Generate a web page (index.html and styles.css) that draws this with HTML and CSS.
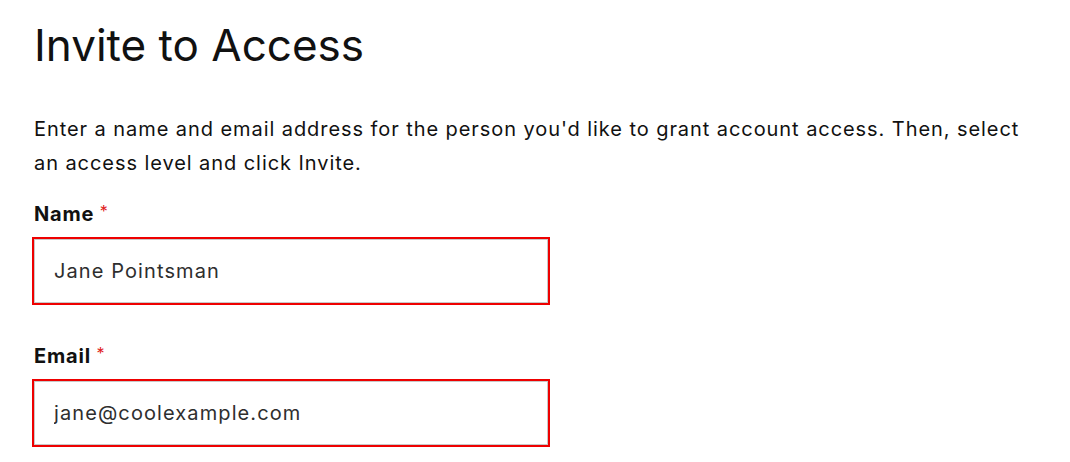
FILE: index.html
```html
<!DOCTYPE html>
<html lang="en">
<head>
<meta charset="utf-8">
<title>Invite to Access</title>
<link rel="stylesheet" href="styles.css">
</head>
<body>
<main class="page">
  <h1 class="title">Invite to Access</h1>
  <p class="intro">Enter a name and email address for the person you'd like to grant account access. Then, select an access level and click Invite.</p>
  <div class="field">
    <label class="label" for="name">Name <span class="req">*</span></label>
    <div class="input-wrap"><input class="input" id="name" type="text" value="Jane Pointsman"></div>
  </div>
  <div class="field">
    <label class="label" for="email">Email <span class="req">*</span></label>
    <div class="input-wrap"><input class="input" id="email" type="email" value="jane@coolexample.com"></div>
  </div>
</main>
</body>
</html>
```
FILE: styles.css
```css
html, body {
  margin: 0;
  background: #fff;
}
.page {
  padding: 15px 0 0 34px;
  font-family: "Inter", "Liberation Sans", sans-serif;
  color: #111;
}
.title {
  margin: 0;
  font-weight: 400;
  font-size: 44px;
  line-height: 60px;
  color: #111;
}
.intro {
  margin: 37px 0 0 0;
  width: 996px;
  font-size: 20px;
  line-height: 34px;
  letter-spacing: 0.93px;
  color: #111;
}
.field {
  margin-top: 21px;
}
.field + .field {
  margin-top: 38px;
}
.label {
  display: block;
  font-weight: 700;
  font-size: 20px;
  line-height: 26px;
  letter-spacing: 0.8px;
}
.req {
  color: #e02020;
  font-size: 16px;
  line-height: 20px;
  vertical-align: top;
  font-weight: 400;
  letter-spacing: 0;
}
.input-wrap {
  margin-top: 10px;
  margin-left: -2px;
  width: 514px;
  border: 2px solid #ee0000;
}
.input {
  display: block;
  box-sizing: border-box;
  width: 100%;
  height: 64px;
  margin: 0;
  border: 1px solid #c8c8c8;
  padding: 0 0 0 19px;
  font-family: inherit;
  font-size: 20px;
  letter-spacing: 1.1px;
  color: #2e2e2e;
  background: #fff;
  outline: none;
}
```
